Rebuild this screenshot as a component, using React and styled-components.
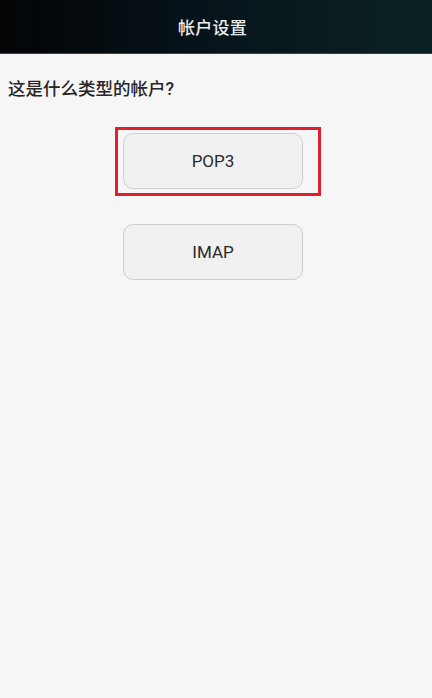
import React from 'react';
import styled, { createGlobalStyle } from 'styled-components';

const Global = createGlobalStyle`
    html, body {
        margin: 0;
        padding: 0;
        background: #f6f6f6;
    }
    body {
        font-family: Roboto, "Noto Sans CJK SC", "Noto Sans", sans-serif;
    }
`
const Wrap = styled.div`
    width: 432px;
    min-height: 698px;
    background: #f6f6f6;
    display: flex;
    flex-direction: column;
`
const Header = styled.div`
    height: 54px;
    padding-right: 7px;
    background: linear-gradient(90deg, #030405 0%, #06131a 45%, #0b2224 100%);
    border-bottom: 1px solid #3a4446;
    box-sizing: border-box;
    display: flex;
    align-items: center;
    justify-content: center;
`
const Title = styled.h1`
    margin: 0;
    font-size: 17px;
    font-weight: 500;
    color: #eceeee;
    letter-spacing: 0.3px;
`
const Question = styled.p`
    margin: 23px 0 0 8px;
    font-size: 17.5px;
    font-weight: 500;
    line-height: 24px;
    color: #262626;
`
const Options = styled.div`
    display: flex;
    flex-direction: column;
    align-items: flex-start;
    padding-left: 115px;
    margin-top: 26px;
`
const Highlight = styled.div`
    border: 3px solid #e0202c;
    padding: 3px 15px 4px 5px;
`
const Choice = styled.button`
    width: 180px;
    height: 56px;
    margin-left: ${p => p.$offset || 0}px;
    margin-top: ${p => p.$top || 0}px;
    border: 1px solid #cfcfcf;
    border-radius: 10px;
    background: #f1f1f1;
    color: #2a2a2a;
    font-family: Roboto, "Noto Sans", sans-serif;
    font-size: 17px;
    padding: 0;
    cursor: pointer;
`

function App(){
    return(
        <Wrap>
            <Global/>
            <Header>
                <Title>帐户设置</Title>
            </Header>
            <Question>这是什么类型的帐户?</Question>
            <Options>
                <Highlight>
                    <Choice>POP3</Choice>
                </Highlight>
                <Choice $offset={8} $top={28}>IMAP</Choice>
            </Options>
        </Wrap>
    )
}
export default App;
